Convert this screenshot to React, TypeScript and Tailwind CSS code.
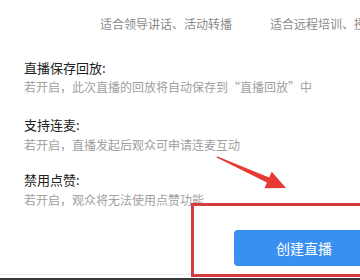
export default function App() {
  return (
    <div
      className="relative w-[360px] h-[280px] overflow-hidden bg-white flex flex-col"
      style={{ fontFamily: '"Noto Sans CJK SC", "Liberation Sans", sans-serif' }}
    >
      {/* scene tags */}
      <div className="flex gap-[38px] pl-[100px] pt-[17px] text-[12px] leading-[14px] text-[#8a8a8a] whitespace-nowrap">
        <span>适合领导讲话、活动转播</span>
        <span>适合远程培训、授课直播</span>
      </div>

      {/* options */}
      <div className="flex flex-col pl-[24px] whitespace-nowrap">
        <h3 className="mt-[29px] text-[13px] leading-[16px] text-[#222]">直播保存回放:</h3>
        <p className="mt-[4px] text-[12px] leading-[14px] text-[#a0a0a0]">
          若开启，此次直播的回放将自动保存到“直播回放”中
        </p>
        <h3 className="mt-[23px] text-[13px] leading-[16px] text-[#222]">支持连麦:</h3>
        <p className="mt-[5px] text-[12px] leading-[14px] text-[#a0a0a0]">
          若开启，直播发起后观众可申请连麦互动
        </p>
        <h3 className="mt-[20px] text-[13px] leading-[16px] text-[#222]">禁用点赞:</h3>
        <p className="mt-[5px] text-[12px] leading-[14px] text-[#a0a0a0]">
          若开启，观众将无法使用点赞功能
        </p>
      </div>

      {/* footer */}
      <div className="flex mt-[23px] pl-[234px]">
        <button className="shrink-0 w-[140px] h-[36px] rounded-[4px] bg-[#3a90f1] text-white text-[14px]">
          创建直播
        </button>
      </div>
      <div className="mt-auto border-t border-[#f0f0f0] pt-[3px]">
        <div className="h-[2px] bg-[#3a3a3a]" />
      </div>

      {/* annotation: red box */}
      <div className="absolute left-[191px] top-[203px] w-[190px] h-[74px] border-[3px] border-[#d23c3f]" />

      {/* annotation: red arrow */}
      <svg className="absolute left-0 top-0 pointer-events-none" width="360" height="280">
        <polygon
          points="217,156.3 269.2,177.4 271.8,171.8 286,188 264.4,188.2 266.9,182.6 216.6,157.6"
          fill="#e63b34"
        />
      </svg>
    </div>
  );
}
